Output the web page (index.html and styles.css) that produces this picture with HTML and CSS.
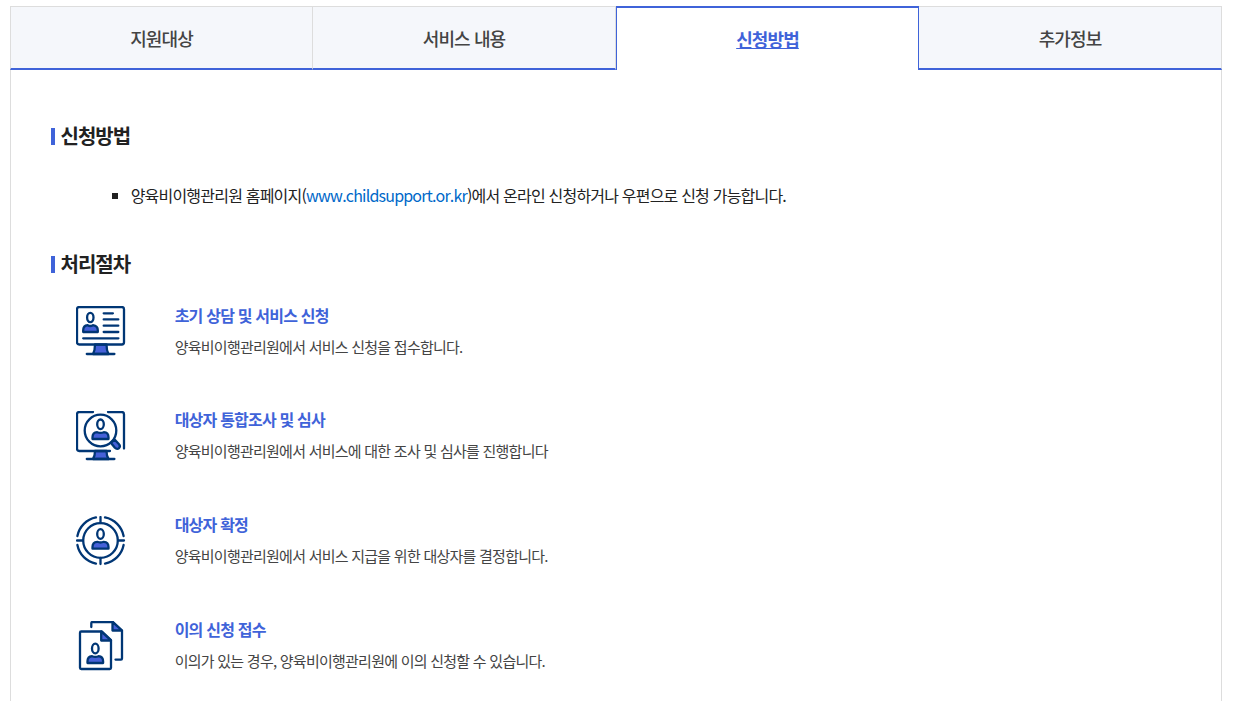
FILE: index.html
```html
<!DOCTYPE html>
<html lang="ko">
<head>
    <meta charset="UTF-8">
    <meta name="viewport" content="width=device-width, initial-scale=1.0">
    <title>신청방법</title>
    <link rel="stylesheet" href="styles.css">
</head>
<body>
    <div class="container">
        <ul class="tabs">
            <li><a href="#">지원대상</a></li>
            <li><a href="#">서비스 내용</a></li>
            <li class="active"><a href="#">신청방법</a></li>
            <li><a href="#">추가정보</a></li>
        </ul>

        <div class="content">
            <h2>신청방법</h2>
            <ul class="method">
                <li>양육비이행관리원 홈페이지(<a href="#">www.childsupport.or.kr</a>)에서 온라인 신청하거나 우편으로 신청 가능합니다.</li>
            </ul>

            <h2>처리절차</h2>
            <ul class="steps">
                <li>
                    <svg class="icon" viewBox="0 0 50 50">
                        <path class="fill" d="M19 38.5h11.5q0 6 2 9.5h-15.5q2-3.5 2-9.5z"/>
                        <rect x="1" y="1" width="47" height="37.5" rx="2.2"/>
                        <path d="M10.8 48h27.6"/>
                        <ellipse cx="14.3" cy="11.5" rx="3.2" ry="4.6"/>
                        <path class="fill" d="M7.2 26v-1.7c0-3 1.8-4.8 4.5-5.1q2.6 1.6 5.2 0c2.8.3 4.9 2.1 4.9 5.1V26z"/>
                        <path d="M27.7 7.3h9.2M27.7 13.4h14.6M27.7 19.7h14.6M27.7 26h14.6M7.2 32.3h35.2"/>
                    </svg>
                    <div class="text">
                        <strong>초기 상담 및 서비스 신청</strong>
                        <p>양육비이행관리원에서 서비스 신청을 접수합니다.</p>
                    </div>
                </li>
                <li>
                    <svg class="icon" viewBox="0 0 50 50">
                        <path class="fill" d="M19 40h11.5q0 5 2 8h-15.5q2-3 2-8z"/>
                        <path d="M17 1H3.2Q1 1 1 3.2v34.6Q1 40 3.2 40H34M32 1h13.8Q48 1 48 3.2V37.5"/>
                        <path d="M10.8 48h27.6"/>
                        <circle cx="24.5" cy="19.5" r="15.8"/>
                        <path class="fill" d="M35 32l3.6-3.6 4.2 4.7c2.8 3-1 6.8-3.9 3.7z"/>
                        <ellipse cx="24.5" cy="13.3" rx="3.3" ry="4.8"/>
                        <path class="fill" d="M16.5 28v-1.7c0-3.1 1.8-4.9 4.7-5.1q3.3 1.4 6.6 0c2.9.2 4.7 2 4.7 5.1V28z"/>
                    </svg>
                    <div class="text">
                        <strong>대상자 통합조사 및 심사</strong>
                        <p>양육비이행관리원에서 서비스에 대한 조사 및 심사를 진행합니다</p>
                    </div>
                </li>
                <li>
                    <svg class="icon" viewBox="0 0 50 50">
                        <circle cx="24.5" cy="24.5" r="17.3"/>
                        <path d="M24.5 1v6M24.5 42v6M1 24.5h6M42 24.5h6"/>
                        <path d="M1.4 20A23.5 23.5 0 0 1 20 1.4M29 1.4A23.5 23.5 0 0 1 47.6 20M47.6 29A23.5 23.5 0 0 1 29 47.6M20 47.6A23.5 23.5 0 0 1 1.4 29"/>
                        <ellipse cx="24.5" cy="18" rx="3.3" ry="4.9"/>
                        <path class="fill" d="M16.5 32.7v-1.8c0-3.1 1.8-4.9 4.7-5.1q3.3 1.4 6.6 0c2.9.2 4.7 2 4.7 5.1v1.8z"/>
                    </svg>
                    <div class="text">
                        <strong>대상자 확정</strong>
                        <p>양육비이행관리원에서 서비스 지급을 위한 대상자를 결정합니다.</p>
                    </div>
                </li>
                <li>
                    <svg class="icon" viewBox="0 0 50 50">
                        <path d="M15.3 6V2.2Q15.3 1 16.5 1H37l9 8.5v28Q46 38.6 45 38.6h-5.5"/>
                        <path class="fill" d="M36.5 1v8.5H46z"/>
                        <path d="M26 10.5H5.2Q4 10.5 4 11.7v35.1Q4 48 5.2 48h28.6Q35 48 35 46.8V19z"/>
                        <path class="fill" d="M25.2 10.5V19.5H35z"/>
                        <ellipse cx="19.3" cy="27.5" rx="3.3" ry="4.9"/>
                        <path class="fill" d="M11.5 42v-1.7c0-3 1.8-4.8 4.6-5.1q3.2 1.4 6.4 0c2.8.3 4.6 2.1 4.6 5.1V42z"/>
                    </svg>
                    <div class="text">
                        <strong>이의 신청 접수</strong>
                        <p>이의가 있는 경우, 양육비이행관리원에 이의 신청할 수 있습니다.</p>
                    </div>
                </li>
            </ul>
        </div>
    </div>
</body>
</html>
```
FILE: styles.css
```css
* {
    margin: 0;
    padding: 0;
    box-sizing: border-box;
}

body {
    height: 701px;
    overflow: hidden;
    padding: 6px 14px 0 10px;
    font-family: 'Noto Sans CJK KR', sans-serif;
    font-size: 16px;
    letter-spacing: -0.05em;
    color: #222;
    background: #fff;
}

ul {
    list-style: none;
}

a {
    color: inherit;
    text-decoration: none;
}

.tabs {
    display: flex;
    height: 64px;
}

.tabs li {
    width: 25%;
    border: 1px solid #ddd;
    border-left: none;
    border-bottom: 2px solid #3f63d9;
    background: #f5f7fb;
}

.tabs li:first-child {
    border-left: 1px solid #ddd;
}

.tabs a {
    display: block;
    line-height: 62px;
    text-align: center;
    font-size: 18px;
    font-weight: 500;
    letter-spacing: -0.9px;
    color: #444;
}

.tabs .active {
    border: 1px solid #3f63d9;
    border-top-width: 2px;
    border-bottom: none;
    background: #fff;
}

.tabs .active a {
    font-weight: 700;
    color: #3f63d9;
    text-decoration: underline;
}

.content {
    height: 660px;
    padding: 51px 40px 0;
    border: 1px solid #ddd;
    border-top: none;
}

h2 {
    display: flex;
    align-items: center;
    gap: 5.5px;
    line-height: 30px;
    font-size: 20px;
    font-weight: 700;
    letter-spacing: -1px;
}

h2::before {
    content: "";
    width: 4px;
    height: 17px;
    background: #3f63d9;
}

.method {
    padding: 30px 0 38px 61px;
}

.method li {
    display: flex;
    align-items: center;
    height: 30px;
    line-height: 28px;
    padding-bottom: 2px;
    letter-spacing: -0.8px;
    white-space: pre;
}

.method li::before {
    content: "";
    width: 6px;
    height: 6px;
    margin: 2px 12.7px 0 0;
    background: #222;
}

.method a {
    color: #0068c9;
}

.steps {
    padding: 27.3px 0 0 25px;
}

.steps li {
    display: flex;
    height: 104.8px;
}

.icon {
    width: 50px;
    height: 50px;
    margin-right: 48.7px;
    fill: none;
    stroke: #003675;
    stroke-width: 2.3;
    stroke-linecap: round;
    stroke-linejoin: round;
}

.icon .fill {
    fill: #4661d8;
}

.text {
    margin-top: -1.7px;
}

.text strong {
    display: block;
    line-height: 20px;
    font-weight: 700;
    letter-spacing: -0.8px;
    color: #3f63d9;
}

.text p {
    margin-top: 12px;
    line-height: 20px;
    font-size: 15px;
    letter-spacing: -0.75px;
    color: #444;
}
```
